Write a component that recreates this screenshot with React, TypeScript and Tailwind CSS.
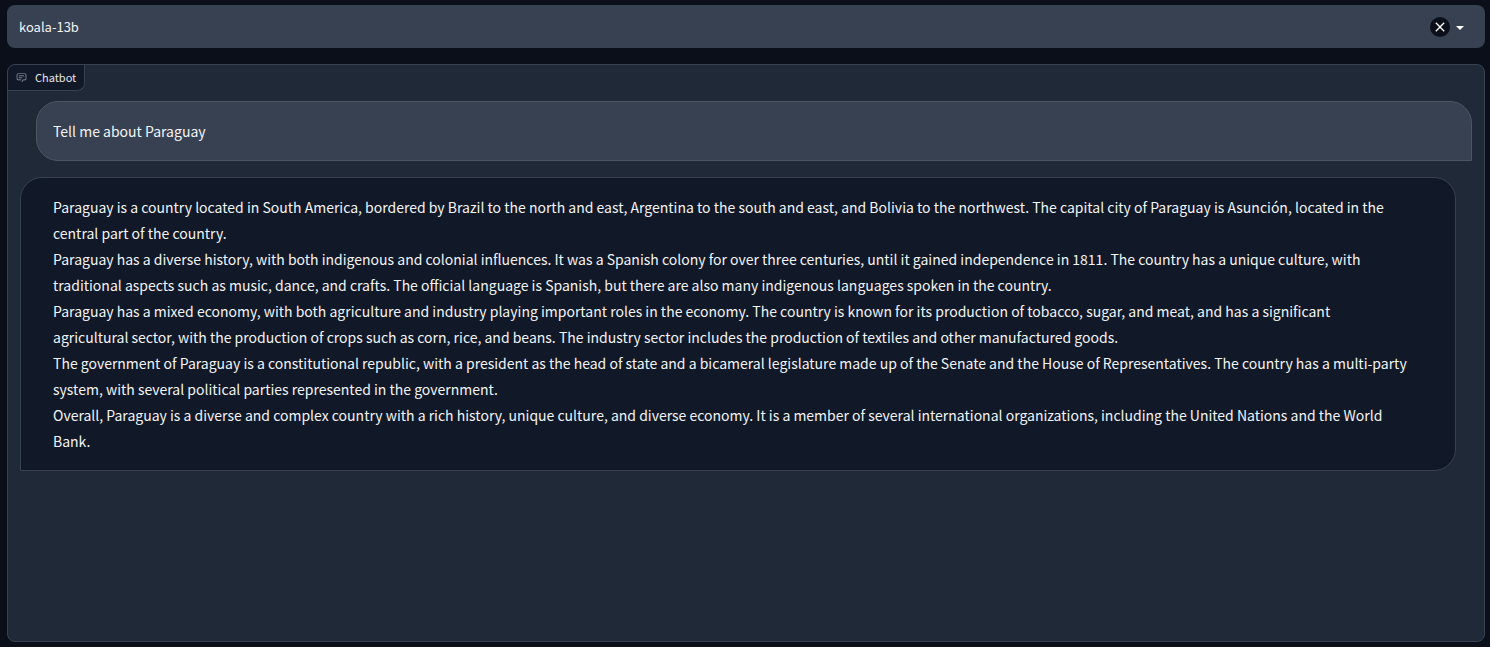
import { useState } from "react";

const answer = [
  "Paraguay is a country located in South America, bordered by Brazil to the north and east, Argentina to the south and east, and Bolivia to the northwest. The capital city of Paraguay is Asunción, located in the central part of the country.",
  "Paraguay has a diverse history, with both indigenous and colonial influences. It was a Spanish colony for over three centuries, until it gained independence in 1811. The country has a unique culture, with traditional aspects such as music, dance, and crafts. The official language is Spanish, but there are also many indigenous languages spoken in the country.",
  "Paraguay has a mixed economy, with both agriculture and industry playing important roles in the economy. The country is known for its production of tobacco, sugar, and meat, and has a significant agricultural\u00a0sector, with the production of crops such as corn, rice, and beans. The industry sector includes the production of textiles and other manufactured goods.",
  "The government of Paraguay is a constitutional republic, with a president as the head of state and a bicameral legislature made up of the Senate and the House of Representatives. The country has a multi-party system, with several political parties represented in the government.",
  "Overall, Paraguay is a diverse and complex country with a rich history, unique culture, and diverse economy. It is a member of several international organizations, including the United Nations and the World Bank.",
];

function ModelPicker() {
  const [model, setModel] = useState("koala-13b");
  return (
    <div className="flex h-[43px] items-center rounded-lg bg-[#374151] pr-4 pl-3">
      <input
        type="text"
        role="combobox"
        aria-label="Model"
        aria-expanded={false}
        value={model}
        onChange={(e) => setModel(e.target.value)}
        className="min-w-0 flex-1 bg-transparent text-[13px] leading-5 text-[#f3f4f6] outline-none"
      />
      <button
        type="button"
        aria-label="Clear"
        onClick={() => setModel("")}
        className="flex size-5 items-center justify-center rounded-full bg-[#0b0f19] text-white"
      >
        <svg viewBox="0 0 24 24" className="size-4" fill="currentColor">
          <path d="M19 6.41L17.59 5 12 10.59 6.41 5 5 6.41 10.59 12 5 17.59 6.41 19 12 13.41 17.59 19 19 17.59 13.41 12z" />
        </svg>
      </button>
      <svg viewBox="0 0 18 18" className="ml-px size-[18px] text-white" fill="currentColor" aria-hidden="true">
        <path d="M5 8l4 4 4-4z" />
      </svg>
    </div>
  );
}

function ChatLabel() {
  return (
    <h2 className="flex h-[26px] items-center gap-2 self-start rounded-tl-lg rounded-br-lg border-r border-b border-[#374151] bg-[#111827] px-2 pb-px text-[11px] leading-4 text-[#e5e7eb]">
      <svg viewBox="0 0 32 32" className="size-[11px] text-[#9ca3af]" fill="currentColor" aria-hidden="true">
        <path d="M17.74 30L16 29l4-7h6a2 2 0 0 0 2-2V8a2 2 0 0 0-2-2H6a2 2 0 0 0-2 2v12a2 2 0 0 0 2 2h9v2H6a4 4 0 0 1-4-4V8a4 4 0 0 1 4-4h20a4 4 0 0 1 4 4v12a4 4 0 0 1-4 4h-4.84Z" />
        <path d="M8 10h16v2H8zm0 6h10v2H8z" />
      </svg>
      Chatbot
    </h2>
  );
}

export default function App() {
  return (
    <main className="flex min-h-screen flex-col gap-4 bg-[#0b0f19] pt-[5px] pr-[5px] pb-[5px] pl-[7px] font-['Noto_Sans_CJK_SC',sans-serif]">
      <ModelPicker />
      <section className="flex flex-1 flex-col rounded-lg border border-[#374151] bg-[#1f2937]">
        <ChatLabel />
        <div className="flex flex-col gap-4 px-3 pt-[10px] pb-4 text-sm/[26px] text-[#f3f4f6]">
          <div className="ml-4 rounded-[22px] rounded-br-none border border-[#4b5563] bg-[#374151] p-4">
            <p>Tell me about Paraguay</p>
          </div>
          <div className="mr-4 rounded-[22px] rounded-bl-none border border-[#374151] bg-[#111827] py-4 pr-10 pl-8">
            {answer.map((text) => (
              <p key={text}>{text}</p>
            ))}
          </div>
        </div>
      </section>
    </main>
  );
}
